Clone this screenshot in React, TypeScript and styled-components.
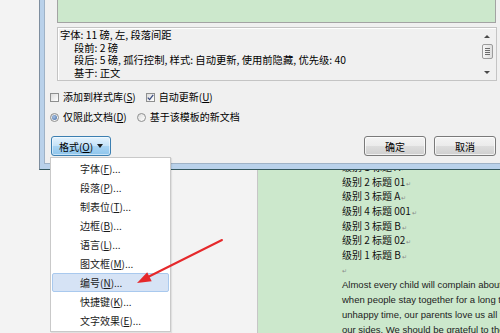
import React from "react";
import styled, { createGlobalStyle } from "styled-components";

const GlobalStyle = createGlobalStyle`
  html, body { margin: 0; padding: 0; width: 500px; height: 333px; overflow: hidden; background: #f3f3f3; }
  body { font-family: "Noto Sans CJK SC", sans-serif; color: #000; }
  #root { width: 500px; height: 333px; }
  * { box-sizing: border-box; }
`;

const Screen = styled.div`
  position: relative;
  width: 500px;
  height: 333px;
  overflow: hidden;
  display: flex;
  background: #f4f4f4;
`;

const Gutter = styled.div`
  width: 258px;
  flex: none;
  background: #f3f3f3;
  border-right: 1px solid #c6c6c6;
`;

const Page = styled.div`
  flex: 1;
  min-width: 0;
  background: #cce8cc;
  padding: 160px 0 0 84px;
  overflow: hidden;
`;

const HeadingLine = styled.div`
  height: 14.7px;
  line-height: 14.7px;
  font-size: 10px;
  white-space: nowrap;
  color: #111;
`;

const Mark = styled.span`
  font-size: 6px;
  color: #8a8a8a;
  margin-left: 1px;
`;

const EmptyLine = styled.div`
  height: 15.4px;
  line-height: 15.4px;
  font-size: 6px;
  color: #8a8a8a;
`;

const BodyLine = styled.div`
  height: 14.8px;
  line-height: 14.8px;
  font-family: "Liberation Sans", Arial, sans-serif;
  font-size: 9.5px;
  white-space: nowrap;
  color: #222;
`;

const Dialog = styled.div`
  position: absolute;
  left: 39px;
  top: 0;
  width: 461px;
  height: 170px;
  background: #b9d1ea;
  border-left: 1px solid #7d8d9e;
  border-bottom: 1px solid #34575e;
  padding: 0 0 5px 4px;
  display: flex;
`;

const DialogBody = styled.div`
  flex: 1;
  background: #f0f0f0;
  border-left: 1px solid #9fb2c6;
  border-bottom: 1px solid #9fb2c6;
  padding: 0 4px 0 5px;
  display: flex;
  flex-direction: column;
  font-size: 10px;
`;

const Preview = styled.div`
  height: 23px;
  margin-left: 7px;
  background: #cce8cc;
  border: 1px solid #a3a3a3;
  border-top: none;
`;

const Description = styled.div`
  height: 54px;
  margin: 4px -1px 0 7px;
  border: 1px solid #c4c4c4;
  box-shadow: inset 1px 1px 0 #ffffff;
  display: flex;
`;

const DescText = styled.div`
  flex: 1;
  padding: 1px 0 0 2px;
  font-size: 10.3px;
`;

const DescLine = styled.div<{ $indent?: boolean }>`
  height: 12.6px;
  line-height: 12.6px;
  white-space: nowrap;
  padding-left: ${(p) => (p.$indent ? "14px" : "0")};
`;

const Scrollbar = styled.div`
  width: 12px;
  margin: 0 3px 0 0;
  display: flex;
  flex-direction: column;
  align-items: center;
`;

const ArrowCell = styled.div`
  height: 16px;
  width: 12px;
  display: flex;
  align-items: center;
  justify-content: center;
`;

const ArrowUp = styled.div`
  width: 0;
  height: 0;
  border-left: 3px solid transparent;
  border-right: 3px solid transparent;
  border-bottom: 3px solid #4a4a4a;
`;

const ArrowDown = styled.div`
  width: 0;
  height: 0;
  border-left: 3px solid transparent;
  border-right: 3px solid transparent;
  border-top: 3px solid #4a4a4a;
`;

const Thumb = styled.div`
  width: 11px;
  height: 15px;
  border: 1px solid #9c9c9c;
  border-radius: 2px;
  background: linear-gradient(to right, #f7f7f7, #dedede);
  display: flex;
  align-items: center;
  justify-content: center;
`;

const Grip = styled.div`
  width: 5px;
  height: 7px;
  background: repeating-linear-gradient(to bottom, #6c6c6c 0, #6c6c6c 1px, transparent 1px, transparent 2px);
`;

const TrackFill = styled.div`
  flex: 1;
`;

const OptionRow = styled.div<{ $top: number }>`
  display: flex;
  align-items: center;
  height: 12px;
  margin-top: ${(p) => p.$top}px;
  white-space: nowrap;
`;

const CheckBox = styled.div<{ $gap?: number }>`
  width: 9px;
  height: 9px;
  flex: none;
  border: 1px solid #8e8f8f;
  background: linear-gradient(135deg, #dcdcdc, #ffffff);
  margin-left: ${(p) => p.$gap ?? 0}px;
  display: flex;
  align-items: center;
  justify-content: center;
`;

const Radio = styled.div<{ $gap?: number }>`
  width: 9px;
  height: 9px;
  flex: none;
  border-radius: 50%;
  border: 1px solid #8e8f8f;
  background: linear-gradient(135deg, #dcdcdc, #ffffff);
  margin-left: ${(p) => p.$gap ?? 0}px;
  display: flex;
  align-items: center;
  justify-content: center;
`;

const RadioDot = styled.div`
  width: 5px;
  height: 5px;
  border-radius: 50%;
  background: radial-gradient(circle at 40% 40%, #a9c4e6, #3b64a0);
`;

const OptLabel = styled.span`
  margin-left: 4px;
  line-height: 12px;
`;

const ButtonRow = styled.div`
  display: flex;
  align-items: center;
  height: 20px;
  margin-top: 13px;
`;

const FormatButton = styled.div`
  width: 60px;
  height: 20px;
  margin-left: 1px;
  border: 1px solid #3c7fb1;
  border-radius: 3px;
  background: linear-gradient(to bottom, #e5f3fd 0%, #c4e2f8 50%, #a9d4f3 51%, #8ec5ec 100%);
  box-shadow: inset 0 0 0 1px rgba(255, 255, 255, 0.5);
  display: flex;
  align-items: center;
  justify-content: center;
  gap: 4px;
`;

const Caret = styled.span`
  width: 0;
  height: 0;
  border-left: 3px solid transparent;
  border-right: 3px solid transparent;
  border-top: 4px solid #1d1d1d;
`;

const Spacer = styled.div`
  flex: 1;
`;

const PlainButton = styled.div<{ $gap?: number }>`
  width: 62px;
  height: 20px;
  margin-left: ${(p) => p.$gap ?? 0}px;
  border: 1px solid #7a7a7a;
  border-radius: 3px;
  background: linear-gradient(to bottom, #f4f4f4 0%, #ebebeb 50%, #dddddd 51%, #cfcfcf 100%);
  box-shadow: inset 0 0 0 1px rgba(255, 255, 255, 0.7);
  display: flex;
  align-items: center;
  justify-content: center;
`;

const Menu = styled.div`
  position: absolute;
  left: 50px;
  top: 157px;
  width: 121px;
  background: #ffffff;
  border: 1px solid #c9c9c9;
  padding: 1px;
  font-size: 10px;
  box-shadow: 1px 1px 1px rgba(0, 0, 0, 0.08);
`;

const MenuItem = styled.div<{ $active?: boolean }>`
  height: 19px;
  line-height: 17px;
  padding-left: 27px;
  border: 1px solid ${(p) => (p.$active ? "#a9c9ee" : "transparent")};
  border-radius: 2px;
  background: ${(p) => (p.$active ? "#d6e3f5" : "transparent")};
  color: #1a1a1a;
  white-space: nowrap;
`;

const Annotation = styled.svg`
  position: absolute;
  left: 0;
  top: 0;
  pointer-events: none;
`;

const headings = [
  "级别 1 标题 A",
  "级别 2 标题 01",
  "级别 3 标题 A",
  "级别 4 标题 001",
  "级别 3 标题 B",
  "级别 2 标题 02",
  "级别 1 标题 B",
];

const bodyLines = [
  "Almost every child will complain about their parents sometimes. It is natural, because",
  "when people stay together for a long time, they are bound to have conflicts.",
  "unhappy time, our parents love us all the time and they are always by",
  "our sides. We should be grateful to them.",
];

const menuItems: { label: string; key: string; active?: boolean }[] = [
  { label: "字体", key: "F" },
  { label: "段落", key: "P" },
  { label: "制表位", key: "T" },
  { label: "边框", key: "B" },
  { label: "语言", key: "L" },
  { label: "图文框", key: "M" },
  { label: "编号", key: "N", active: true },
  { label: "快捷键", key: "K" },
  { label: "文字效果", key: "E" },
];

export default function App() {
  return (
    <>
      <GlobalStyle />
      <Screen>
        <Gutter />
        <Page>
          {headings.map((h) => (
            <HeadingLine key={h}>
              {h}
              <Mark>↵</Mark>
            </HeadingLine>
          ))}
          <EmptyLine>↵</EmptyLine>
          {bodyLines.map((l) => (
            <BodyLine key={l}>{l}</BodyLine>
          ))}
        </Page>

        <Dialog>
          <DialogBody>
            <Preview />
            <Description>
              <DescText>
                <DescLine>字体: 11 磅, 左, 段落间距</DescLine>
                <DescLine $indent>段前: 2 磅</DescLine>
                <DescLine $indent>段后: 5 磅, 孤行控制, 样式: 自动更新, 使用前隐藏, 优先级: 40</DescLine>
                <DescLine $indent>基于: 正文</DescLine>
              </DescText>
              <Scrollbar>
                <ArrowCell>
                  <ArrowUp />
                </ArrowCell>
                <Thumb>
                  <Grip />
                </Thumb>
                <TrackFill />
                <ArrowCell>
                  <ArrowDown />
                </ArrowCell>
              </Scrollbar>
            </Description>

            <OptionRow $top={10}>
              <CheckBox />
              <OptLabel>
                添加到样式库(<u>S</u>)
              </OptLabel>
              <CheckBox $gap={10}>
                <svg width="7" height="7" viewBox="0 0 7 7">
                  <path d="M0.8 3.6 L2.6 5.6 L6.2 0.9" fill="none" stroke="#3b4c80" strokeWidth="1.3" />
                </svg>
              </CheckBox>
              <OptLabel>
                自动更新(<u>U</u>)
              </OptLabel>
            </OptionRow>

            <OptionRow $top={8}>
              <Radio>
                <RadioDot />
              </Radio>
              <OptLabel>
                仅限此文档(<u>D</u>)
              </OptLabel>
              <Radio $gap={10} />
              <OptLabel>基于该模板的新文档</OptLabel>
            </OptionRow>

            <ButtonRow>
              <FormatButton>
                <span>
                  格式(<u>O</u>)
                </span>
                <Caret />
              </FormatButton>
              <Spacer />
              <PlainButton>确定</PlainButton>
              <PlainButton $gap={8}>取消</PlainButton>
            </ButtonRow>
          </DialogBody>
        </Dialog>

        <Menu>
          {menuItems.map((m) => (
            <MenuItem key={m.key} $active={m.active}>
              {m.label}(<u>{m.key}</u>)...
            </MenuItem>
          ))}
        </Menu>

        <Annotation width="500" height="333" viewBox="0 0 500 333">
          <line x1="222" y1="240" x2="148" y2="277" stroke="#e5282b" strokeWidth="2" strokeLinecap="round" />
          <polygon points="137,283 151.7,281.2 147.2,272.2" fill="#e5282b" />
        </Annotation>
      </Screen>
    </>
  );
}
